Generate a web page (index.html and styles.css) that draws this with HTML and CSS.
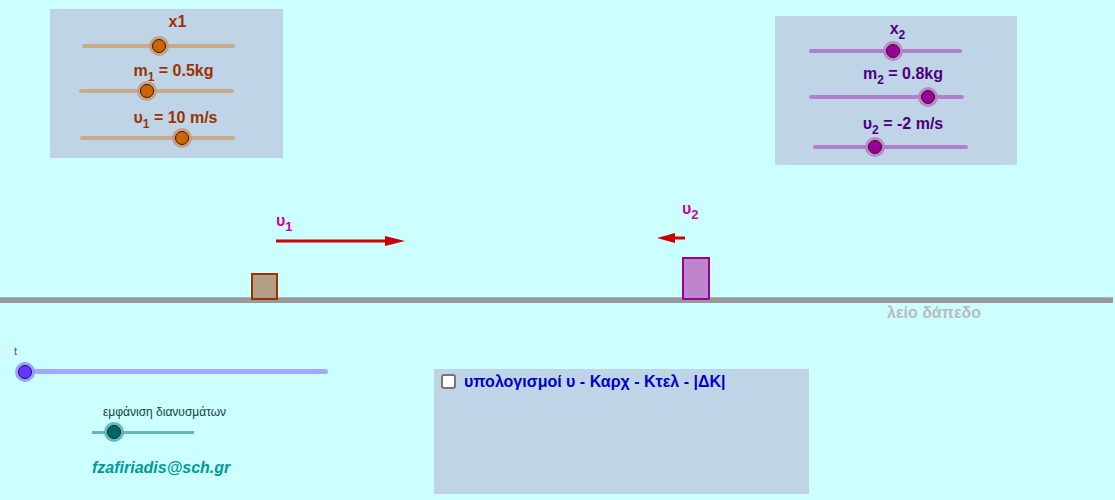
FILE: index.html
```html
<!DOCTYPE html>
<html lang="el">
<head>
<meta charset="utf-8">
<title>Κρούση</title>
<link rel="stylesheet" href="styles.css">
</head>
<body>
<div class="canvas">

  <div class="ground"></div>

  <div class="panel panel--one">
    <div class="slider slider--brown slider--plain s1a">
      <div class="lbl">x1</div>
      <div class="track-wrap"><div class="track"></div><span class="knob" style="left:50%"></span></div>
    </div>
    <div class="slider slider--brown s1b">
      <div class="lbl">m<sub>1</sub> = 0.5kg</div>
      <div class="track-wrap"><div class="track"></div><span class="knob" style="left:44%"></span></div>
    </div>
    <div class="slider slider--brown s1c">
      <div class="lbl">υ<sub>1</sub> = 10 m/s</div>
      <div class="track-wrap"><div class="track"></div><span class="knob" style="left:66%"></span></div>
    </div>
  </div>

  <div class="panel panel--two">
    <div class="slider slider--purple s2a">
      <div class="lbl">x<sub>2</sub></div>
      <div class="track-wrap"><div class="track"></div><span class="knob" style="left:55%"></span></div>
    </div>
    <div class="slider slider--purple s2b">
      <div class="lbl">m<sub>2</sub> = 0.8kg</div>
      <div class="track-wrap"><div class="track"></div><span class="knob" style="left:77%"></span></div>
    </div>
    <div class="slider slider--purple s2c">
      <div class="lbl">υ<sub>2</sub> = -2 m/s</div>
      <div class="track-wrap"><div class="track"></div><span class="knob" style="left:40%"></span></div>
    </div>
  </div>

  <div class="vlabel vlabel--one">υ<sub>1</sub></div>
  <svg class="arrow arrow--one" width="132" height="12" viewBox="0 0 132 12">
    <line x1="1" y1="6" x2="114" y2="6" stroke="#cc0000" stroke-width="3"/>
    <polygon points="110,1 130,6 110,11" fill="#cc0000"/>
  </svg>

  <div class="vlabel vlabel--two">υ<sub>2</sub></div>
  <svg class="arrow arrow--two" width="30" height="12" viewBox="0 0 30 12">
    <line x1="14" y1="6" x2="28" y2="6" stroke="#cc0000" stroke-width="3"/>
    <polygon points="18,1 0,6 18,11" fill="#cc0000"/>
  </svg>

  <div class="block block--one"></div>
  <div class="block block--two"></div>
  <div class="floor-label">λείο δάπεδο</div>

  <div class="tslider">
    <div class="tlabel">t</div>
    <div class="ttrack-wrap"><div class="ttrack"></div><span class="tknob"></span></div>
  </div>

  <div class="vecslider">
    <div class="veclabel">εμφάνιση διανυσμάτων</div>
    <div class="vectrack-wrap"><div class="vectrack"></div><span class="vecknob"></span></div>
  </div>

  <div class="email">fzafiriadis@sch.gr</div>

  <div class="calc-panel">
    <label class="calc-row"><span class="cbox"></span><span class="calc-text">υπολογισμοί υ - Καρχ - Κτελ - |ΔΚ|</span></label>
  </div>

</div>
</body>
</html>
```

FILE: styles.css
```css
html, body {
  margin: 0;
  padding: 0;
  background: #ccffff;
}

.canvas {
  position: relative;
  width: 1115px;
  height: 500px;
  overflow: hidden;
  background: #ccffff;
  font-family: "Liberation Sans", Arial, sans-serif;
}

/* panels */
.panel {
  position: absolute;
  background: #bfd4e6;
  display: flex;
  flex-direction: column;
  box-sizing: border-box;
}
.panel--one {
  left: 50px;
  top: 9px;
  width: 233px;
  height: 149px;
  padding-top: 4px;
}
.panel--two {
  left: 775px;
  top: 16px;
  width: 242px;
  height: 149px;
  padding-top: 4px;
}

.slider {
  display: flex;
  flex-direction: column;
}
.lbl {
  height: 18px;
  line-height: 18px;
  font-size: 16px;
  font-weight: bold;
  text-align: center;
  white-space: nowrap;
}
.lbl sub {
  font-size: 12px;
  line-height: 0;
  vertical-align: -5px;
}
.track-wrap {
  position: relative;
  height: 14px;
  margin-top: 4px;
}
.slider--plain .track-wrap {
  margin-top: 8px;
}
.track {
  position: absolute;
  left: 0;
  right: 0;
  top: 5px;
  height: 4px;
  border-radius: 2px;
}
.knob {
  position: absolute;
  top: 7px;
  width: 12px;
  height: 12px;
  margin-left: -7px;
  margin-top: -7px;
  border-radius: 50%;
  border: 1px solid #2a1a10;
}

.slider--brown .lbl { color: #993300; }
.slider--brown .track { background: #c9aa8c; }
.slider--brown .knob {
  background: #cc6600;
  box-shadow: 0 0 0 3px rgba(201, 150, 110, 0.85);
}
.slider--purple .lbl { color: #4c0080; }
.slider--purple .track { background: #b37fcc; }
.slider--purple .knob {
  background: #990099;
  box-shadow: 0 0 0 3px rgba(190, 120, 200, 0.85);
}

/* per-slider placement in panel one */
.s1a { margin-left: 32px; width: 153px; }
.s1a .lbl { padding-left: 38px; }
.s1b { margin-left: 29px; width: 155px; margin-top: 9px; }
.s1b .lbl { padding-left: 34px; }
.s1c { margin-left: 30px; width: 155px; margin-top: 11px; }
.s1c .lbl { padding-left: 36px; }

/* panel two */
.s2a { margin-left: 34px; width: 153px; }
.s2a .track-wrap { margin-top: 6px; }
.s2a .lbl { padding-left: 24px; }
.s2b { margin-left: 34px; width: 155px; margin-top: 7px; }
.s2b .track-wrap { margin-top: 7px; }
.s2b .lbl { padding-left: 33px; }
.s2c { margin-left: 38px; width: 155px; margin-top: 11px; }
.s2c .track-wrap { margin-top: 7px; }
.s2c .lbl { padding-left: 25px; }

/* vector labels & arrows */
.vlabel {
  position: absolute;
  color: #cc00aa;
  font-size: 16px;
  font-weight: bold;
  line-height: 18px;
}
.vlabel sub {
  font-size: 13px;
  line-height: 0;
  vertical-align: -5px;
}
.vlabel--one { left: 276px; top: 212px; }
.vlabel--two { left: 682px; top: 200px; }

.arrow { position: absolute; display: block; }
.arrow--one { left: 275px; top: 235px; }
.arrow--two { left: 657px; top: 232px; }

/* blocks */
.block {
  position: absolute;
  box-sizing: border-box;
}
.block--one {
  left: 251px;
  top: 273px;
  width: 27px;
  height: 27px;
  background: #b59e86;
  border: 2px solid #993300;
}
.block--two {
  left: 682px;
  top: 257px;
  width: 28px;
  height: 43px;
  background: #bf85cc;
  border: 2px solid #990099;
}

.ground {
  position: absolute;
  left: 0;
  top: 297px;
  width: 1113px;
  height: 6px;
  background: #999999;
  border-top: 1px solid #a8b8b8;
  box-sizing: border-box;
}

.floor-label {
  position: absolute;
  left: 887px;
  top: 304px;
  color: #bbbbbb;
  font-size: 16px;
  font-weight: bold;
  line-height: 18px;
}

/* t slider */
.tslider {
  position: absolute;
  left: 14px;
  top: 345px;
  width: 320px;
}
.tlabel {
  color: #6633ff;
  font-size: 11px;
  line-height: 13px;
}
.ttrack-wrap {
  position: relative;
  height: 18px;
  margin-top: 5px;
  margin-left: 11px;
  width: 303px;
}
.ttrack {
  position: absolute;
  left: 0;
  right: 0;
  top: 6px;
  height: 5px;
  border-radius: 3px;
  background: #a0a8ff;
}
.tknob {
  position: absolute;
  left: 0;
  top: 9px;
  width: 12px;
  height: 12px;
  margin-left: -7px;
  margin-top: -7px;
  border-radius: 50%;
  background: #6633ff;
  border: 1px solid #221144;
  box-shadow: 0 0 0 3px rgba(150, 150, 255, 0.9);
}

/* vectors slider */
.vecslider {
  position: absolute;
  left: 92px;
  top: 405px;
  width: 150px;
}
.veclabel {
  color: #114444;
  font-size: 12px;
  line-height: 14px;
  padding-left: 11px;
  white-space: nowrap;
}
.vectrack-wrap {
  position: relative;
  width: 102px;
  height: 14px;
  margin-top: 6px;
}
.vectrack {
  position: absolute;
  left: 0;
  right: 0;
  top: 6px;
  height: 3px;
  background: #66b8b8;
}
.vecknob {
  position: absolute;
  left: 22px;
  top: 7px;
  width: 12px;
  height: 12px;
  margin-left: -7px;
  margin-top: -7px;
  border-radius: 50%;
  background: #006666;
  border: 1px solid #0a2a2a;
  box-shadow: 0 0 0 3px rgba(90, 180, 180, 0.9);
}

.email {
  position: absolute;
  left: 92px;
  top: 458px;
  color: #009999;
  font-size: 16px;
  font-weight: bold;
  font-style: italic;
  line-height: 20px;
}

/* checkbox panel */
.calc-panel {
  position: absolute;
  left: 434px;
  top: 369px;
  width: 375px;
  height: 125px;
  background: #bfd4e6;
  box-sizing: border-box;
  padding: 5px 0 0 7px;
}
.calc-row {
  display: flex;
  align-items: center;
  gap: 8px;
}
.cbox {
  width: 11px;
  height: 11px;
  border: 2px solid #767676;
  border-radius: 3px;
  background: #ffffff;
}
.calc-text {
  color: #0000cc;
  font-size: 16px;
  font-weight: bold;
  line-height: 15px;
}
```
